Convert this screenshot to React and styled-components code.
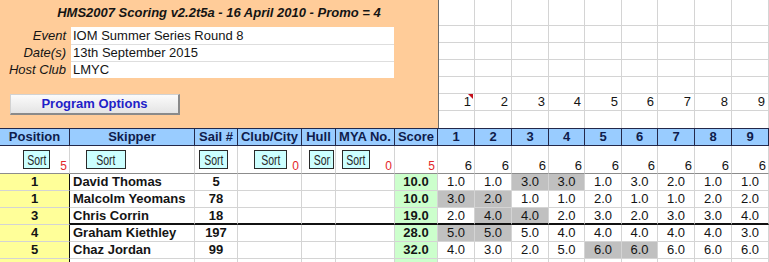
import React from "react";
import styled, { createGlobalStyle } from "styled-components";

const GRID = "#d4d4d4";
const DARK = "#23284a";

const GlobalStyle = createGlobalStyle`
  * { box-sizing: border-box; }
  body {
    margin: 0;
    background: #ffffff;
    font-family: "Liberation Sans", Arial, sans-serif;
    color: #141414;
    overflow: hidden;
  }
`;

const raceWidths = [37, 37, 37, 36, 37, 36, 37, 37, 37];

const rows = [
  { pos: "1", name: "David Thomas", sail: "5", score: "10.0", r: ["1.0", "1.0", "3.0", "3.0", "1.0", "3.0", "2.0", "1.0", "1.0"], drop: [2, 3] },
  { pos: "1", name: "Malcolm Yeomans", sail: "78", score: "10.0", r: ["3.0", "2.0", "1.0", "1.0", "2.0", "1.0", "1.0", "2.0", "2.0"], drop: [0, 1] },
  { pos: "3", name: "Chris Corrin", sail: "18", score: "19.0", r: ["2.0", "4.0", "4.0", "2.0", "3.0", "2.0", "3.0", "3.0", "4.0"], drop: [1, 2], thick: true },
  { pos: "4", name: "Graham Kiethley", sail: "197", score: "28.0", r: ["5.0", "5.0", "5.0", "4.0", "4.0", "4.0", "4.0", "4.0", "3.0"], drop: [0, 1] },
  { pos: "5", name: "Chaz Jordan", sail: "99", score: "32.0", r: ["4.0", "3.0", "2.0", "5.0", "6.0", "6.0", "6.0", "6.0", "6.0"], drop: [4, 5] },
];

const headers = ["Position", "Skipper", "Sail #", "Club/City", "Hull", "MYA No.", "Score"];

// sort buttons: offset from the cell's left edge, width, optional red count
const sortCells = [
  { left: 23, width: 27, count: "5" },
  { left: 16, width: 40 },
  { left: 4, width: 29 },
  { left: 16, width: 33, count: "0" },
  { left: 7, width: 25, clip: 22 },
  { left: 6, width: 28, count: "0" },
  { count: "5" },
];

const Sheet = styled.div`
  width: 769px;
  height: 262px;
  overflow: hidden;
`;

const Top = styled.div`
  display: flex;
  height: 128px;
`;

const InfoPanel = styled.div`
  width: 439px;
  background: #ffcc99;
  border-right: 1px solid #6b6b6b;
  display: flex;
  flex-direction: column;
`;

const Title = styled.div`
  height: 26px;
  line-height: 25px;
  text-align: center;
  font-size: 13px;
  font-weight: bold;
  font-style: italic;
`;

const Fields = styled.div`
  margin-top: 1px;
  display: flex;
  flex-direction: column;
`;

const FieldRow = styled.div`
  display: grid;
  grid-template-columns: 71px 323px;
  height: 17px;
`;

const Label = styled.div`
  font-size: 13px;
  font-style: italic;
  text-align: right;
  padding-right: 5px;
  line-height: 17px;
  white-space: nowrap;
`;

const Value = styled.div`
  background: #ffffff;
  font-size: 13px;
  padding-left: 2px;
  border-top: ${(p) => (p.$first ? "none" : "1px solid #dedede")};
  line-height: ${(p) => (p.$first ? "17px" : "16px")};
`;

const OptionsButton = styled.div`
  margin: 16px 0 0 10px;
  width: 170px;
  height: 21px;
  background: linear-gradient(#fbfbfb, #e4e4e4);
  border: 1px solid #d2d2d2;
  border-right: 2px solid #8a8a8a;
  border-bottom: 2px solid #8a8a8a;
  color: #1f22c8;
  font-size: 13px;
  font-weight: bold;
  text-align: center;
  line-height: 18px;
`;

const TopGrid = styled.div`
  flex: 1;
  display: grid;
  grid-template-columns: ${raceWidths.map((w, i) => `${i === 0 ? w - 1 : w}px`).join(" ")};
  grid-template-rows: 26px repeat(6, 17px);
`;

const GridCell = styled.div`
  position: relative;
  border-right: 1px solid ${GRID};
  border-bottom: ${(p) => (p.$last ? "none" : `1px solid ${GRID}`)};
  font-size: 13px;
  color: #141414;
  text-align: right;
  padding-right: 3px;
  line-height: 16px;
`;

const CommentMark = styled.span`
  position: absolute;
  top: 0;
  right: 1px;
  width: 0;
  height: 0;
  border-top: 5px solid #c4101c;
  border-left: 5px solid transparent;
`;

const Table = styled.div`
  display: grid;
  grid-template-columns: 70px 125px 43px 64px 34px 59px 43px ${raceWidths.map((w) => `${w}px`).join(" ")};
  grid-template-rows: 18px 28px repeat(6, 17px);
`;

const HeadCell = styled.div`
  background: #99ccff;
  border-top: 1px solid ${DARK};
  border-bottom: 1px solid ${DARK};
  border-right: 1px solid ${DARK};
  color: #0f1c4c;
  font-size: 13px;
  font-weight: bold;
  text-align: center;
  line-height: 16px;
  white-space: nowrap;
  overflow: hidden;
`;

const SortCell = styled.div`
  display: flex;
  align-items: flex-start;
  padding-top: 4px;
  border-right: 1px solid ${GRID};
  border-bottom: 1px solid #8c8c8c;
`;

const SortButton = styled.div`
  margin-left: ${(p) => p.$left}px;
  width: ${(p) => p.$width}px;
  height: 19px;
  flex-shrink: 0;
  background: #ccffff;
  border: 1px solid #2a2a2a;
  display: flex;
  align-items: center;
  justify-content: center;
  overflow: hidden;
`;

const SortLabel = styled.span`
  display: inline-block;
  flex-shrink: 0;
  font-size: 14px;
  color: #2a2a2a;
  line-height: 16px;
  white-space: nowrap;
  overflow: hidden;
  max-width: ${(p) => (p.$clip ? `${p.$clip}px` : "none")};
  transform: scaleX(0.75);
`;

const Count = styled.span`
  margin-left: auto;
  align-self: flex-end;
  padding-right: 2px;
  color: ${(p) => (p.$red ? "#e3262a" : "#141414")};
  font-size: ${(p) => (p.$red ? "12px" : "13px")};
  line-height: 14px;
`;

const DataCell = styled.div`
  background: ${(p) => p.$bg || "#ffffff"};
  border-right: 1px solid ${(p) => (p.$darkRight ? "#111111" : GRID)};
  border-bottom: ${(p) => (p.$thick ? "2px solid #111111" : `1px solid ${GRID}`)};
  font-size: 13px;
  font-weight: ${(p) => (p.$bold ? "bold" : "normal")};
  text-align: ${(p) => p.$align || "center"};
  padding-left: ${(p) => (p.$align === "left" ? "3px" : "0")};
  line-height: ${(p) => (p.$thick ? "15px" : "16px")};
  white-space: nowrap;
  overflow: hidden;
`;

const fields = [
  ["Event", "IOM Summer Series Round 8"],
  ["Date(s)", "13th September 2015"],
  ["Host Club", "LMYC"],
];

function DataRow({ row }) {
  const thick = row.thick;
  return (
    <>
      <DataCell $bg="#ffff99" $bold $darkRight>{row.pos}</DataCell>
      <DataCell $bold $align="left" $thick={thick}>{row.name}</DataCell>
      <DataCell $bold $thick={thick}>{row.sail}</DataCell>
      <DataCell $thick={thick} />
      <DataCell $thick={thick} />
      <DataCell $thick={thick} />
      <DataCell $bg="#ccffcc" $bold $thick={thick}>{row.score}</DataCell>
      {row.r.map((v, i) => (
        <DataCell key={i} $bg={row.drop.includes(i) ? "#c0c0c0" : undefined} $thick={thick}>
          {v}
        </DataCell>
      ))}
    </>
  );
}

export default function App() {
  return (
    <Sheet>
      <GlobalStyle />
      <Top>
        <InfoPanel>
          <Title>HMS2007 Scoring v2.2t5a - 16 April 2010 - Promo = 4</Title>
          <Fields>
            {fields.map(([label, value], i) => (
              <FieldRow key={label}>
                <Label>{label}</Label>
                <Value $first={i === 0}>{value}</Value>
              </FieldRow>
            ))}
          </Fields>
          <OptionsButton>Program Options</OptionsButton>
        </InfoPanel>
        <TopGrid>
          {Array.from({ length: 7 }).map((_, r) =>
            raceWidths.map((_, c) => (
              <GridCell key={`${r}-${c}`} $last={r === 6}>
                {r === 5 ? c + 1 : null}
                {r === 5 && c === 0 ? <CommentMark /> : null}
              </GridCell>
            ))
          )}
        </TopGrid>
      </Top>
      <Table>
        {headers.map((h) => (
          <HeadCell key={h}>{h}</HeadCell>
        ))}
        {raceWidths.map((_, i) => (
          <HeadCell key={`r${i}`}>{i + 1}</HeadCell>
        ))}

        {sortCells.map((s, i) => (
          <SortCell key={`s${i}`}>
            {s.width ? (
              <SortButton $left={s.left} $width={s.width}>
                <SortLabel $clip={s.clip}>Sort</SortLabel>
              </SortButton>
            ) : null}
            {s.count ? <Count $red>{s.count}</Count> : null}
          </SortCell>
        ))}
        {raceWidths.map((_, i) => (
          <SortCell key={`rs${i}`}>
            <Count>6</Count>
          </SortCell>
        ))}

        {rows.map((row, i) => (
          <DataRow key={i} row={row} />
        ))}
        <DataRow row={{ pos: "", name: "", sail: "", score: "", r: Array(9).fill(""), drop: [] }} />
      </Table>
    </Sheet>
  );
}
